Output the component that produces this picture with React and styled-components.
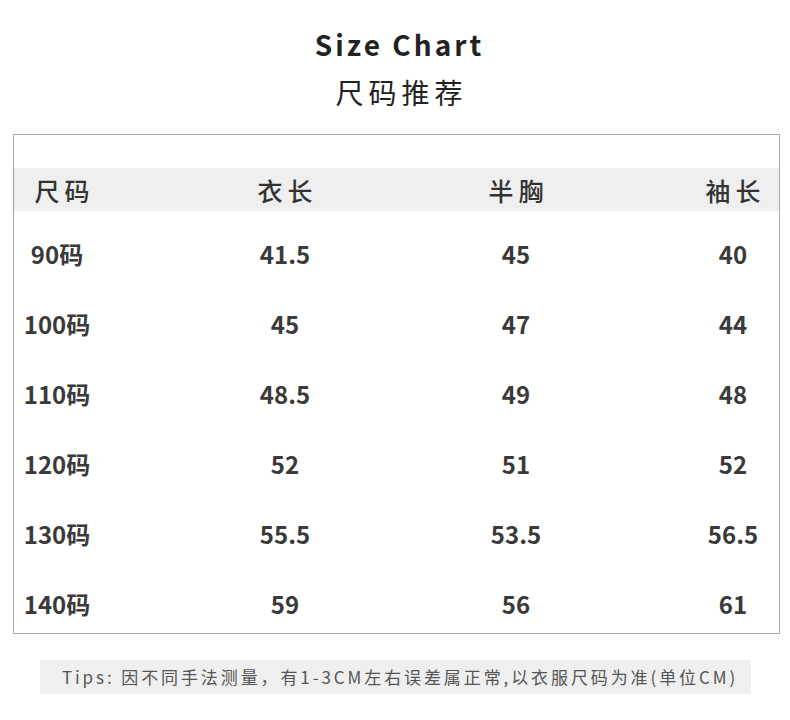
import styled, { createGlobalStyle } from "styled-components";

const GlobalStyle = createGlobalStyle`
  body {
    margin: 0;
    background: #fff;
    font-family: "Noto Sans CJK SC", "Noto Sans", sans-serif;
  }
`;

const sizes = [
  ["90码", "41.5", "45", "40"],
  ["100码", "45", "47", "44"],
  ["110码", "48.5", "49", "48"],
  ["120码", "52", "51", "52"],
  ["130码", "55.5", "53.5", "56.5"],
  ["140码", "59", "56", "61"],
];

const headers = ["尺码", "衣长", "半胸", "袖长"];

export default function App() {
  return (
    <Page>
      <GlobalStyle />
      <Title>Size Chart</Title>
      <SubTitle>尺码推荐</SubTitle>
      <ChartBox>
        <HeadRow>
          {headers.map((h) => (
            <HeadCell key={h}>{h}</HeadCell>
          ))}
        </HeadRow>
        <Body>
          {sizes.map((row) => (
            <Row key={row[0]}>
              {row.map((v, i) => (
                <Cell key={i}>{v}</Cell>
              ))}
            </Row>
          ))}
        </Body>
      </ChartBox>
      <Tips>Tips: 因不同手法测量，有1-3CM左右误差属正常,以衣服尺码为准(单位CM)</Tips>
    </Page>
  );
}

const Page = styled.div`
  width: 790px;
  height: 720px;
  padding-top: 25px;
  box-sizing: border-box;
  display: flex;
  flex-direction: column;
  align-items: center;
`;

const Title = styled.h1`
  margin: 0;
  height: 38px;
  line-height: 38px;
  font-size: 28px;
  font-weight: 700;
  letter-spacing: 3px;
  color: #222;
  padding-left: 9px;
`;

const SubTitle = styled.h2`
  margin: 9px 0 0;
  height: 40px;
  line-height: 40px;
  font-size: 28px;
  font-weight: 400;
  letter-spacing: 5px;
  color: #222;
  padding-left: 13px;
`;

const ChartBox = styled.div`
  align-self: flex-start;
  margin: 22px 0 0 13px;
  width: 767px;
  border: 1px solid #a9a9a9;
  padding-top: 33px;
  box-sizing: border-box;
`;

const grid = `
  display: grid;
  grid-template-columns: 86px 122px 92px 94px;
  column-gap: 124px;
`;

const HeadRow = styled.div`
  ${grid}
  height: 43px;
  align-items: center;
  background: #efefef;
`;

const HeadCell = styled.div`
  text-align: center;
  white-space: nowrap;
  font-size: 25px;
  font-weight: 500;
  letter-spacing: 5px;
  color: #333;
  margin-right: -5px;

  &:first-child {
    padding-left: 10px;
  }
`;

const Body = styled.div`
  padding-bottom: 2px;
`;

const Row = styled.div`
  ${grid}
  height: 70px;
  padding-top: 28px;
  box-sizing: border-box;
`;

const Cell = styled.div`
  text-align: center;
  white-space: nowrap;
  line-height: 30px;
  height: 30px;
  font-size: 24px;
  font-weight: 700;
  color: #3a3a3a;
`;

const Tips = styled.div`
  margin-top: 26px;
  width: 711px;
  height: 34px;
  line-height: 34px;
  padding-left: 10px;
  box-sizing: border-box;
  background: #efefef;
  text-align: center;
  font-size: 17px;
  font-weight: 400;
  letter-spacing: 2.9px;
  color: #555;
  white-space: nowrap;
`;
